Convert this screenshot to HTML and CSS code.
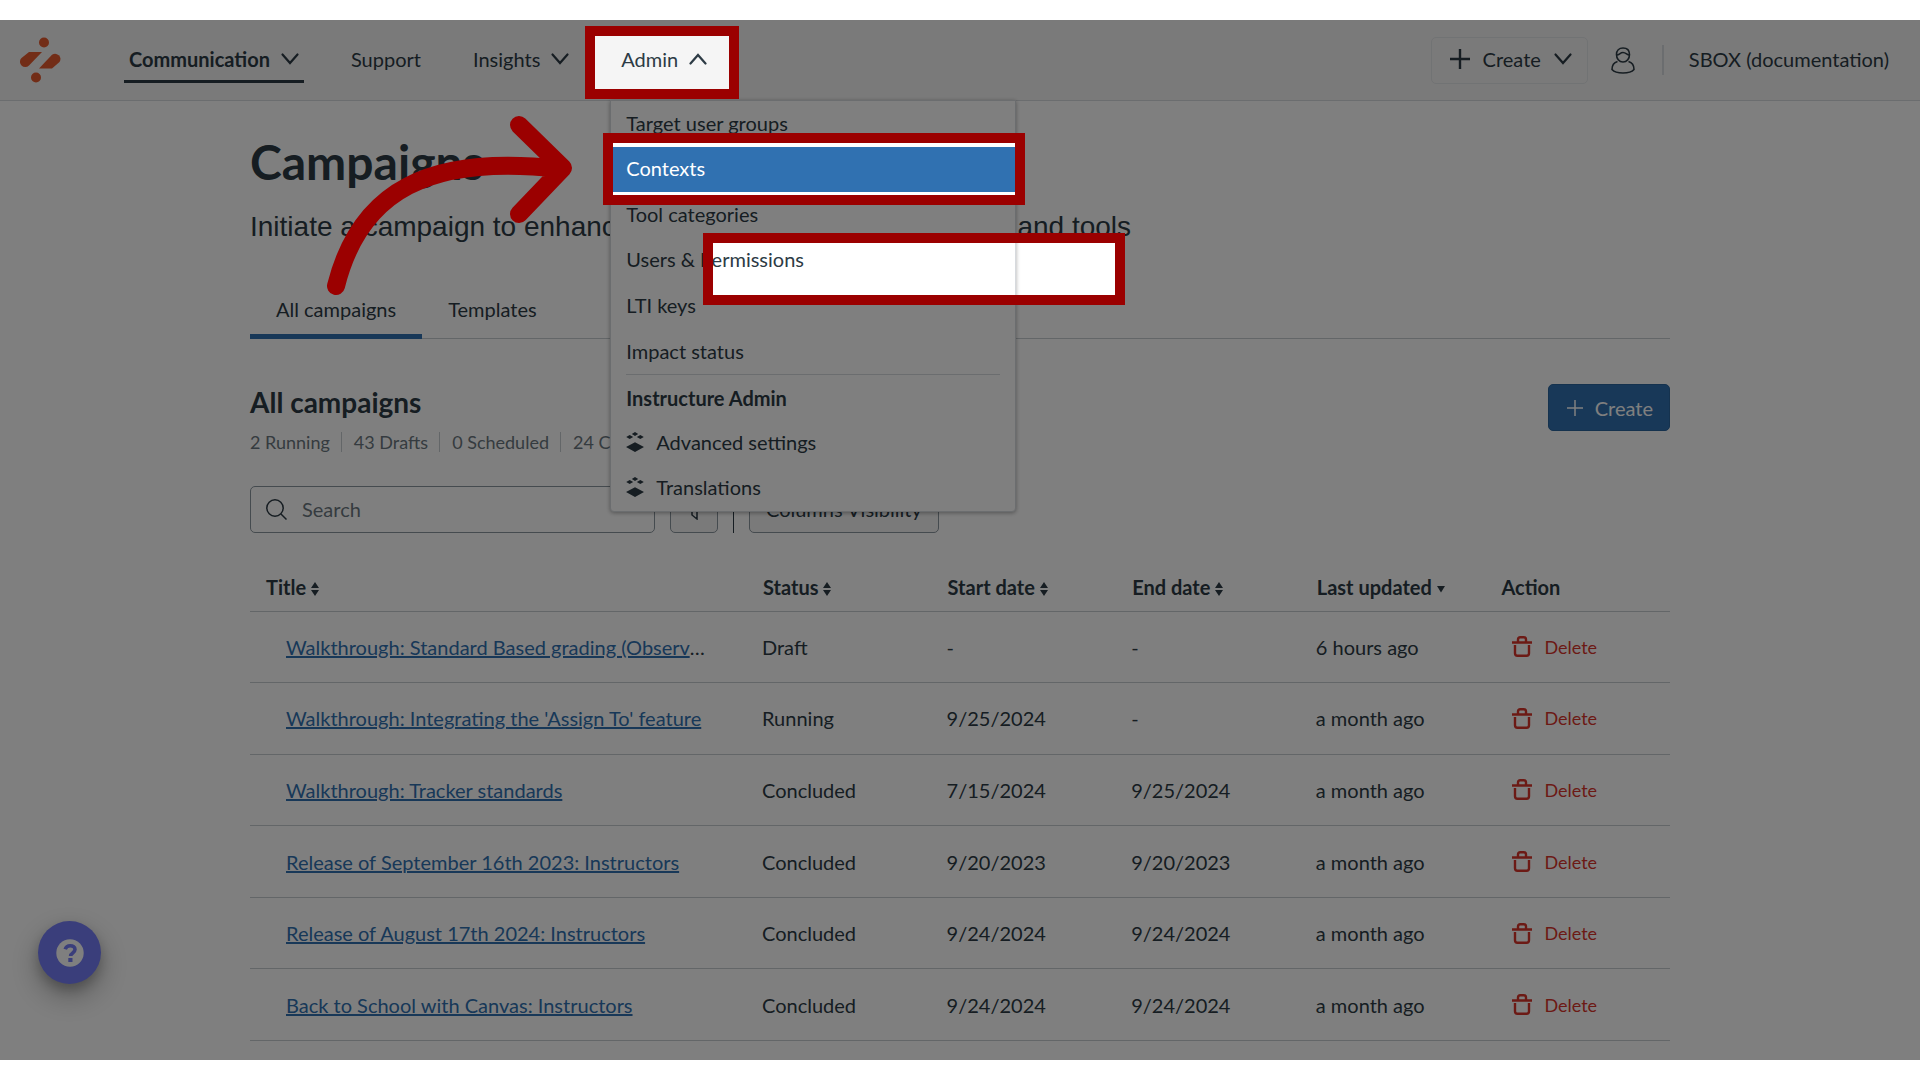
FILE: index.html
```html
<!DOCTYPE html>
<html lang="en">
<head>
<meta charset="utf-8">
<meta name="viewport" content="width=device-width, initial-scale=1">
<title>Campaigns</title>
<link rel="stylesheet" href="styles.css">
</head>
<body>
<svg class="sprite" aria-hidden="true">
  <symbol id="chevron" viewBox="0 0 18 12"><path d="M1.5 1.5 9 10l7.5-8.500" fill="none" stroke="currentColor" stroke-width="2.200" stroke-linecap="round"/></symbol>
  <symbol id="plus" viewBox="0 0 20 20"><path d="M10 0v20M0 10h20" fill="none" stroke="currentColor" stroke-width="2.400"/></symbol>
  <symbol id="plus-thin" viewBox="0 0 16 16"><path d="M8 0v16M0 8h16" fill="none" stroke="currentColor" stroke-width="1.500"/></symbol>
  <symbol id="stack" viewBox="0 0 18 20"><path d="M9 10.200 18 15l-9 5-9-5zM9 0l3.200 2L9 4 5.800 2zM3.700 2.900 7.200 5 3.700 7.100.200 5zM14.300 2.900 17.800 5l-3.500 2.100L10.800 5z" fill="currentColor"/></symbol>
  <symbol id="sort" viewBox="0 0 8 14"><path d="M4 0l4 6H0zM4 14l4-6H0z" fill="currentColor"/></symbol>
  <symbol id="sort-down" viewBox="0 0 8 14"><path d="M4 10.500l4-6.500H0z" fill="currentColor"/></symbol>
  <symbol id="trash" viewBox="0 0 20 21"><path d="M0 6.500h20M6 6V3.500Q6 1.300 8.200 1.300h3.600Q14 1.300 14 3.500V6M3 9v8.300Q3 19.700 5.400 19.700h9.200Q17 19.700 17 17.300V9" fill="none" stroke="currentColor" stroke-width="2.400"/></symbol>
</svg>

<div class="app">
  <header class="topbar">
    <a class="logo" href="#" aria-label="Home">
      <svg width="42" height="46" viewBox="0 0 42 46" fill="#e55a2e"><circle cx="24" cy="5.500" r="5"/><circle cx="16" cy="40.500" r="5"/><path d="M9 15H22L9 28.500A5.300 5.300 0 0 1 1.500 21z"/><path d="M32 31.500H19L32 17.800A5.300 5.300 0 0 1 39.500 25z"/></svg>
    </a>
    <nav class="nav">
      <button class="nav-item nav-item-active" type="button">Communication <svg class="chevron"><use href="#chevron"/></svg></button>
      <a class="nav-item" href="#">Support</a>
      <button class="nav-item" type="button">Insights <svg class="chevron"><use href="#chevron"/></svg></button>
      <div class="nav-group">
        <button class="nav-item" type="button" aria-expanded="true">Admin <svg class="chevron chevron-up"><use href="#chevron"/></svg></button>
        <div class="menu">
          <a class="menu-item" href="#">Target user groups</a>
          <a class="menu-item menu-item-current" href="#">Contexts</a>
          <a class="menu-item" href="#">Tool categories</a>
          <a class="menu-item" href="#">Users &amp; Permissions</a>
          <a class="menu-item" href="#">LTI keys</a>
          <a class="menu-item" href="#">Impact status</a>
          <div class="menu-item menu-title">Instructure Admin</div>
          <a class="menu-item" href="#"><svg class="stack"><use href="#stack"/></svg>Advanced settings</a>
          <a class="menu-item" href="#"><svg class="stack"><use href="#stack"/></svg>Translations</a>
        </div>
      </div>
    </nav>
    <div class="account">
      <button class="create-menu" type="button"><svg class="plus"><use href="#plus"/></svg>Create <svg class="chevron"><use href="#chevron"/></svg></button>
      <button class="user" type="button" aria-label="Account">
        <svg width="24" height="27" viewBox="0 0 24 27" fill="none" stroke="currentColor" stroke-width="1.600"><path d="M5.500 7.500C5.500 3.500 8 1 12 1s6.500 2.500 6.500 6.500S16 15 12 15 5.500 11.500 5.500 7.500z"/><path d="M5.800 8C8.500 8 9 5.500 12 5.500S16 8 18.300 8"/><path d="M6.500 14.500C3 15.500 1 18.500 1 22.500 3 24.800 7 26 12 26s9-1.200 11-3.500c0-4-2-7-5.500-8"/></svg>
      </button>
      <span class="account-name">SBOX (documentation)</span>
    </div>
  </header>

  <main class="content">
    <h1>Campaigns</h1>
    <p class="lead">Initiate a campaign to enhance the understanding of products and tools</p>
    <div class="tabs">
      <button class="tab tab-active" type="button">All campaigns</button>
      <button class="tab" type="button">Templates</button>
    </div>

    <div class="section-head">
      <div>
        <h2>All campaigns</h2>
        <ul class="stats"><li>2 Running</li><li>43 Drafts</li><li>0 Scheduled</li><li>24 Concluded</li></ul>
      </div>
      <button class="create" type="button"><svg class="plus-thin"><use href="#plus-thin"/></svg>Create</button>
    </div>

    <div class="filters">
      <label class="search">
        <svg width="21" height="21" viewBox="0 0 21 21" fill="none" stroke="currentColor" stroke-width="1.500"><circle cx="9" cy="9" r="8.200"/><path d="M15 15l5.500 5.500"/></svg>
        <input type="search" placeholder="Search" aria-label="Search">
      </label>
      <button class="filter" type="button" aria-label="Filter"><svg width="20" height="22" viewBox="0 0 20 22" fill="none" stroke="currentColor" stroke-width="1.500"><path d="M1 1h18l-6 9v11l-5-4v-7z"/></svg></button>
      <span class="divider"></span>
      <button class="columns" type="button">Columns Visibility</button>
    </div>

    <table class="campaigns">
      <thead>
        <tr>
          <th class="col-title">Title <svg class="sort"><use href="#sort"/></svg></th>
          <th>Status <svg class="sort"><use href="#sort"/></svg></th>
          <th>Start date <svg class="sort"><use href="#sort"/></svg></th>
          <th>End date <svg class="sort"><use href="#sort"/></svg></th>
          <th>Last updated <svg class="sort"><use href="#sort-down"/></svg></th>
          <th>Action</th>
        </tr>
      </thead>
      <tbody>
        <tr><td><a href="#">Walkthrough: Standard Based grading (Observer)</a></td><td>Draft</td><td>-</td><td>-</td><td>6 hours ago</td><td><button class="delete" type="button"><svg class="trash"><use href="#trash"/></svg>Delete</button></td></tr>
        <tr><td><a href="#">Walkthrough: Integrating the 'Assign To' feature</a></td><td>Running</td><td>9/25/2024</td><td>-</td><td>a month ago</td><td><button class="delete" type="button"><svg class="trash"><use href="#trash"/></svg>Delete</button></td></tr>
        <tr><td><a href="#">Walkthrough: Tracker standards</a></td><td>Concluded</td><td>7/15/2024</td><td>9/25/2024</td><td>a month ago</td><td><button class="delete" type="button"><svg class="trash"><use href="#trash"/></svg>Delete</button></td></tr>
        <tr><td><a href="#">Release of September 16th 2023: Instructors</a></td><td>Concluded</td><td>9/20/2023</td><td>9/20/2023</td><td>a month ago</td><td><button class="delete" type="button"><svg class="trash"><use href="#trash"/></svg>Delete</button></td></tr>
        <tr><td><a href="#">Release of August 17th 2024: Instructors</a></td><td>Concluded</td><td>9/24/2024</td><td>9/24/2024</td><td>a month ago</td><td><button class="delete" type="button"><svg class="trash"><use href="#trash"/></svg>Delete</button></td></tr>
        <tr><td><a href="#">Back to School with Canvas: Instructors</a></td><td>Concluded</td><td>9/24/2024</td><td>9/24/2024</td><td>a month ago</td><td><button class="delete" type="button"><svg class="trash"><use href="#trash"/></svg>Delete</button></td></tr>
      </tbody>
    </table>
  </main>

  <button class="help" type="button" aria-label="Help">
    <svg width="28" height="28" viewBox="0 0 28 28"><circle cx="14" cy="14" r="13.700" fill="#fff"/><path d="M9.200 10.300C10 7.700 12 6.700 14.200 6.700c2.800 0 4.800 1.500 4.800 3.900 0 3.400-4.400 3.200-4.400 6.400" fill="none" stroke="#747cf7" stroke-width="3.600"/><path d="M12.300 19h4.200v4h-4.200z" fill="#747cf7"/></svg>
  </button>

  <svg class="spotlight" aria-hidden="true">
    <path fill="#000" fill-opacity=".5" fill-rule="evenodd" d="M0 0H9999V9999H0zM595 15H730V69H595zM612 122H1016V176H612zM712 222H1116V276H712z"/>
    <g fill="none" stroke="#9b0000">
      <g stroke-width="10"><path d="M590 11H734V74H590zM608 118H1020V180H608zM708 218H1120V280H708z"/></g>
      <path d="M336 266C360 170 430 134 560 149M519 105 563 148 519 194" stroke-width="18" stroke-linecap="round" stroke-linejoin="round"/>
    </g>
  </svg>
</div>
</body>
</html>
```
FILE: styles.css
```css
* { box-sizing: border-box; }

body {
  margin: 0;
  padding: 20px 0;
  background: #fff;
  color: #2d3b45;
  font-family: Lato, "Liberation Sans", sans-serif;
  font-size: 20px;
  line-height: 24px;
}

button, input { font: inherit; color: inherit; }
button { padding: 0; border: 0; background: none; white-space: nowrap; }
a { color: inherit; text-decoration: none; }
svg { flex: none; }
.sprite { display: none; }

.app {
  position: relative;
  min-height: calc(100vh - 40px);
  overflow: hidden;
}

/* Top bar */
.topbar {
  display: flex;
  height: 81px;
  padding: 0 31px 0 20px;
  background: #f5f5f5;
  border-bottom: 1px solid #d7dade;
}
.logo { display: flex; align-items: center; margin-right: 62px; }
.nav { display: flex; align-items: center; gap: 42px; }
.nav-group { position: relative; display: flex; align-items: center; align-self: stretch; }
.nav-item {
  display: flex;
  align-items: center;
  gap: 11px;
  height: 46px;
  padding: 0 5px 2px;
  border-top: 3px solid transparent;
  border-bottom: 3px solid transparent;
}
.nav-item-active { font-weight: 700; border-bottom-color: #2d3b45; }
.chevron { width: 18px; height: 12px; }
.chevron-up { transform: rotate(180deg); }

.menu {
  position: absolute;
  z-index: 1;
  top: 100%;
  left: -6px;
  display: grid;
  grid-auto-rows: 1fr;
  width: 406px;
  height: 412px;
  background: #fff;
  border: 1px solid #d7dade;
  border-radius: 0 0 4px 4px;
  box-shadow: 0 1px 4px rgba(0, 0, 0, .35);
}
.menu-item { display: flex; align-items: center; gap: 12px; padding: 0 15px 2px; }
.menu-item-current { background: #3071b1; color: #fff; }
.menu-title {
  margin: 0 15px;
  padding: 0;
  border-top: 1px solid #d7dade;
  font-weight: 700;
}
.stack { width: 18px; height: 20px; }

.account { display: flex; align-items: center; margin-left: auto; }
.create-menu {
  display: flex;
  align-items: center;
  gap: 13px;
  height: 47px;
  padding: 0 15px 2px 18px;
  border: 1px solid #e3e6e8;
  border-radius: 5px;
}
.plus { width: 20px; height: 20px; }
.user { display: flex; margin: 0 27px 0 23px; }
.account-name {
  display: flex;
  align-items: center;
  height: 30px;
  padding: 0 0 2px 25px;
  border-left: 2px solid #d7dade;
}

/* Page */
.content { width: 74%; max-width: 1420px; margin: 0 auto; padding-top: 31px; }
h1 { margin: 0; font-size: 48px; line-height: 60px; }
.lead {
  margin: 19px 0 0;
  font-family: "Liberation Sans", Arial, sans-serif;
  font-size: 28px;
  line-height: 32px;
}
.tabs { display: flex; margin-top: 40px; border-bottom: 1px solid #c7cdd1; }
.tab {
  height: 56px;
  margin-bottom: -1px;
  padding: 0 26px;
  border-bottom: 5px solid transparent;
}
.tab-active { border-bottom-color: #3071b1; }

.section-head { display: flex; justify-content: space-between; align-items: flex-start; margin-top: 45px; }
h2 { margin: 0; font-size: 28px; line-height: 36px; }
.stats {
  display: flex;
  margin: 12px 0 0;
  padding: 0;
  list-style: none;
  color: #6b7780;
  font-size: 18px;
  line-height: 20px;
}
.stats li + li { margin-left: 11px; padding-left: 12px; border-left: 1px solid #c7cdd1; }
.create {
  display: flex;
  align-items: center;
  gap: 12px;
  height: 47px;
  padding: 0 16px 0 18px;
  border: 1px solid #2b659d;
  border-radius: 5px;
  background: #3071b1;
  color: #fff;
}
.plus-thin { width: 16px; height: 16px; }

.filters { display: flex; align-items: center; gap: 15px; margin-top: 33px; }
.search {
  display: flex;
  align-items: center;
  gap: 15px;
  width: 405px;
  height: 47px;
  padding: 0 15px;
  border: 1px solid #8b969e;
  border-radius: 5px;
}
.search input { flex: 1; min-width: 0; padding: 0; border: 0; background: none; outline: 0; }
.search input::placeholder { color: #6b7780; opacity: 1; }
.filter, .columns { height: 48px; border: 1px solid #8b969e; border-radius: 5px; background: #f5f5f5; }
.filter { display: flex; align-items: center; justify-content: center; width: 48px; }
.divider { width: 1px; height: 48px; background: #2d3b45; }
.columns { padding: 0 16px; }

.campaigns { width: 100%; height: 478px; margin-top: 30px; border-collapse: collapse; table-layout: fixed; }
.campaigns th { height: 48px; padding: 0 0 0 16px; text-align: left; font-weight: 700; }
.campaigns .col-title { width: 35%; }
.campaigns td { height: 71px; padding: 0 0 0 15px; }
.campaigns tr { border-bottom: 1px solid #c7cdd1; }
.campaigns td:first-child {
  padding: 0 36px;
  overflow: hidden;
  text-overflow: ellipsis;
  white-space: nowrap;
}
.campaigns td a { color: #3071b1; text-decoration: underline; }
.sort { width: 8px; height: 14px; vertical-align: -1px; }
.delete { display: flex; align-items: center; gap: 12px; margin-left: 12px; color: #d9352b; font-size: 18px; }
.trash { width: 20px; height: 21px; }

/* Floating help */
.help {
  position: absolute;
  left: 38px;
  bottom: 76px;
  display: flex;
  align-items: center;
  justify-content: center;
  width: 63px;
  height: 63px;
  border-radius: 50%;
  background: #747cf7;
  box-shadow: 0 12px 30px rgba(0, 0, 0, .3), 0 6px 12px rgba(0, 0, 0, .2);
}

/* Dimmed layer with highlighted regions */
.spotlight {
  position: absolute;
  z-index: 2;
  top: 0;
  left: 0;
  width: 100%;
  height: 100%;
  pointer-events: none;
}
```
